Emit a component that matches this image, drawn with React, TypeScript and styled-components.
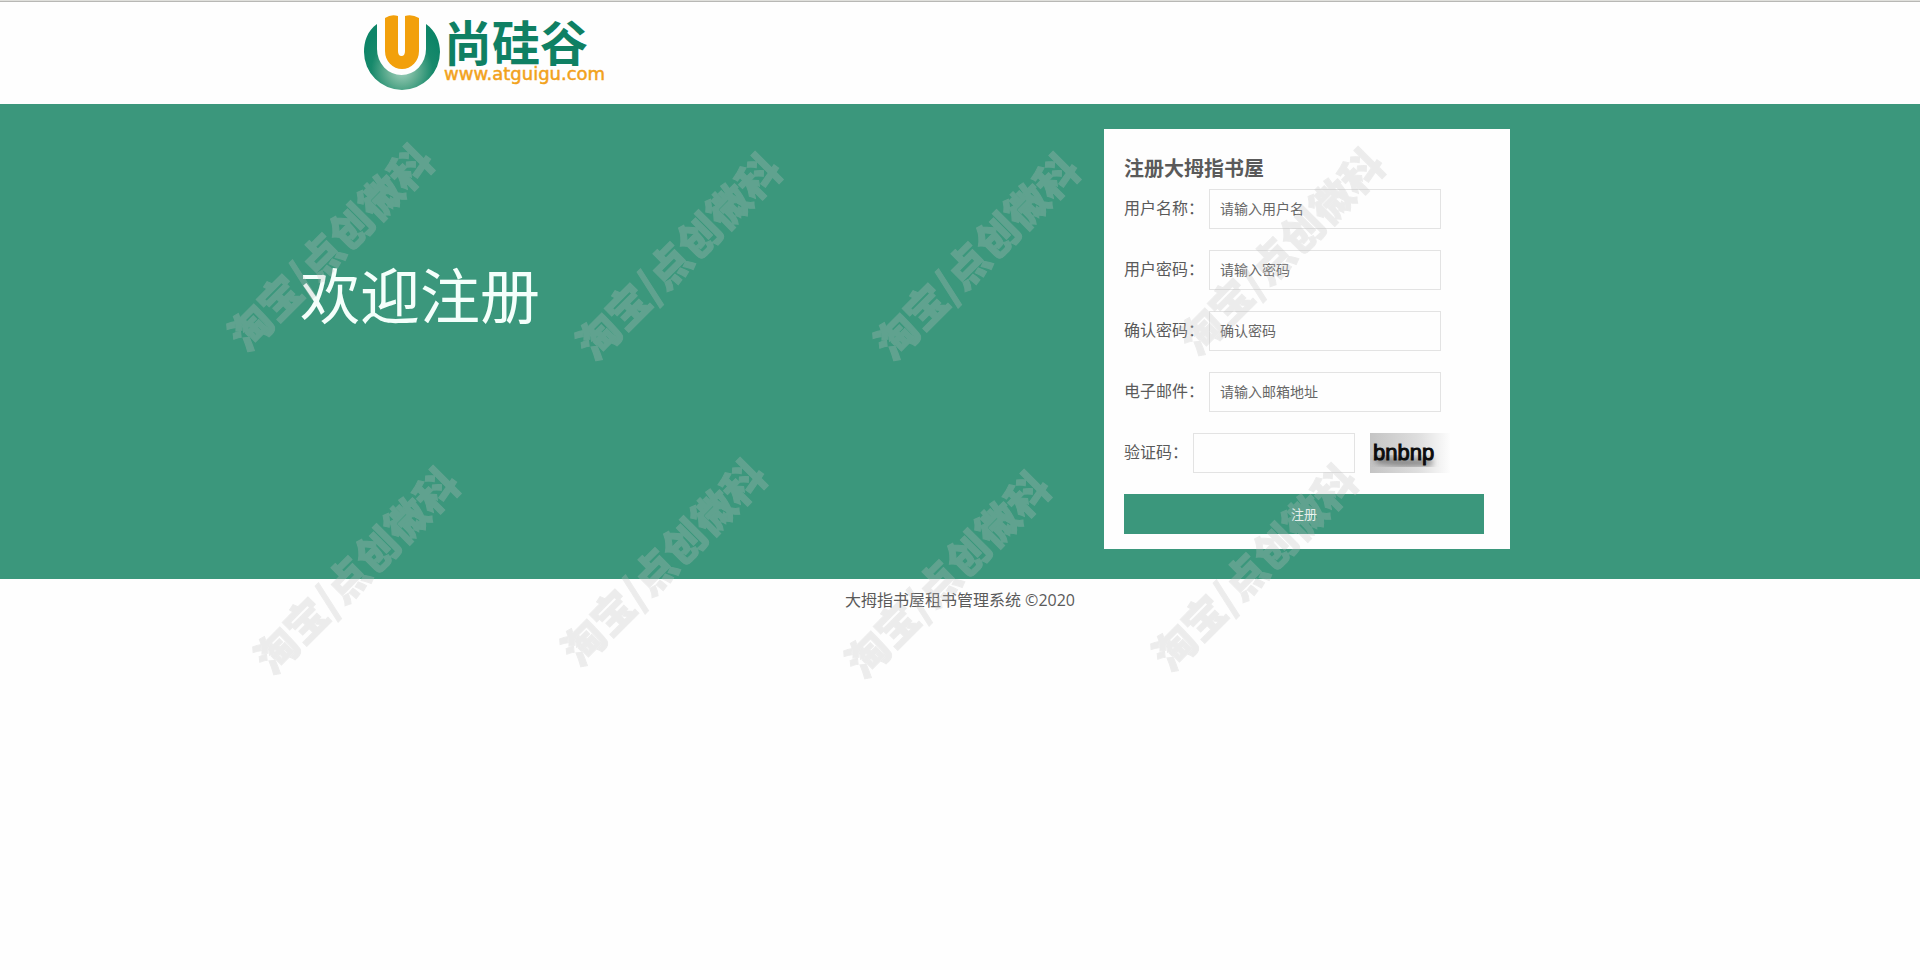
import React from "react";
import styled, { createGlobalStyle } from "styled-components";

const GREEN = "#3b977c";
const FONT = '"Open Sans", "Noto Sans CJK SC", sans-serif';

const GlobalStyle = createGlobalStyle`
  * { box-sizing: border-box; }
  body {
    margin: 0;
    background: #fefefe;
    color: #5a5a5a;
    font-family: ${FONT};
    font-size: 16px;
  }
`;

const Page = styled.div`
  position: relative;
  overflow-x: hidden;
  min-height: 100vh;
`;

const Header = styled.header`
  display: flex;
  justify-content: center;
  height: 104px;
  padding-top: 9px;
  border-top: 1px solid #e0e0dc;
  box-shadow: inset 0 1px 0 #b8b8b5;
`;

const HeaderInner = styled.div`
  width: 100%;
  max-width: 1200px;
`;

const LogoLink = styled.a`
  display: inline-block;
  svg { display: block; overflow: visible; }
`;

const Hero = styled.main`
  display: flex;
  justify-content: center;
  padding: 25px 0 30px;
  background: ${GREEN};
`;

const HeroInner = styled.div`
  display: flex;
  justify-content: space-between;
  align-items: flex-start;
  width: 100%;
  max-width: 1320px;
  padding-right: 110px;
`;

const Welcome = styled.h1`
  margin: 123px 0 0;
  color: #f4fffb;
  font-size: 60px;
  font-weight: 400;
  line-height: 88px;
`;

const Card = styled.form`
  width: 406px;
  padding: 20px 26px 15px 20px;
  background: #fefefe;
`;

const CardTitle = styled.h2`
  margin: 0;
  font-size: 20px;
  font-weight: 700;
  line-height: 40px;
`;

const Row = styled.div`
  display: flex;
  align-items: center;
  height: 40px;
  margin-bottom: 21px;
`;

const Label = styled.label`
  margin-right: 5px;
  padding-bottom: 2px;
  line-height: 24px;
  white-space: nowrap;
`;

const TextInput = styled.input<{ $short?: boolean }>`
  width: ${(p) => (p.$short ? 162 : 232)}px;
  height: 40px;
  padding: 0 10px 2px;
  border: 1px solid #e3e3e3;
  border-radius: 0;
  background: transparent;
  color: #555;
  font-family: ${FONT};
  font-size: 14px;
  outline: none;
  &::placeholder { color: #666; opacity: 1; }
  &:focus { border-color: ${GREEN}; }
`;

const CaptchaImage = styled.svg`
  display: block;
  margin-left: 15px;
`;

const SubmitButton = styled.button`
  display: block;
  width: 100%;
  height: 40px;
  padding: 0 0 2px;
  border: 0;
  background: ${GREEN};
  color: #f4fffb;
  font-family: ${FONT};
  font-size: 13px;
  cursor: pointer;
`;

const Footer = styled.footer`
  padding-top: 9px;
  line-height: 24px;
  text-align: center;
`;

const Watermarks = styled.div`
  position: absolute;
  inset: 0;
  overflow: hidden;
  pointer-events: none;
`;

const Mark = styled.span<{ $x: number; $y: number }>`
  position: absolute;
  left: ${(p) => p.$x}px;
  top: ${(p) => p.$y}px;
  color: #c1c1c1;
  -webkit-text-stroke: 1px #c1c1c1;
  opacity: 0.28;
  font-family: "Noto Sans CJK SC", sans-serif;
  font-size: 42px;
  font-weight: 900;
  line-height: 42px;
  white-space: nowrap;
  transform: translate(-50%, -50%) rotate(-45deg);
`;

const marks = [
  [329, 246],
  [677, 255],
  [975, 255],
  [1280, 250],
  [355, 569],
  [662, 561],
  [946, 573],
  [1253, 566],
];

const fields = [
  { id: "username", label: "用户名称：", type: "text", hint: "请输入用户名" },
  { id: "password", label: "用户密码：", type: "password", hint: "请输入密码" },
  { id: "confirm", label: "确认密码：", type: "password", hint: "确认密码" },
  { id: "email", label: "电子邮件：", type: "text", hint: "请输入邮箱地址" },
];

function Logo() {
  return (
    <svg width="260" height="84" viewBox="360 10 260 84" role="img" aria-label="尚硅谷">
      <defs>
        <radialGradient id="bowl" gradientUnits="userSpaceOnUse" cx="402" cy="70" r="44">
          <stop offset="0" stopColor="#a5d3c0" />
          <stop offset="0.35" stopColor="#62ae92" />
          <stop offset="0.7" stopColor="#17896b" />
          <stop offset="1" stopColor="#0d8467" />
        </radialGradient>
      </defs>
      <path
        d="M377 24 C367 31 364 42 364 52 A38 38 0 0 0 440 52 C440 42 436 31 426 24 V49 A24.500 26 0 0 1 377 49 Z"
        fill="url(#bowl)"
      />
      <path
        d="M385 18 Q391 14 398 16 V51 Q398 56 401.500 56 Q405 56 405 51 V16 Q412 14 419 18 V51 A17 18 0 0 1 385 51 Z"
        fill="#f2a00c"
      />
      <text x="444" y="61" fill="#0f8063" fontSize="48" fontWeight="700" fontFamily='"Noto Sans CJK SC", sans-serif'>
        尚硅谷
      </text>
      <text x="444" y="80" fill="#f2a21c" stroke="#f2a21c" strokeWidth="0.5" fontSize="18" fontFamily='"DejaVu Sans", sans-serif'>
        www.atguigu.com
      </text>
    </svg>
  );
}

function Captcha() {
  return (
    <CaptchaImage width="80" height="40" viewBox="0 0 80 40" role="img" aria-label="验证码图片">
      <defs>
        <linearGradient id="paper" x1="0" y1="0" x2="1" y2="0">
          <stop offset="0" stopColor="#c4c4c4" />
          <stop offset="0.6" stopColor="#dedede" />
          <stop offset="1" stopColor="#fdfdfd" />
        </linearGradient>
        <filter id="soft" x="-20%" y="-100%" width="140%" height="300%">
          <feGaussianBlur stdDeviation="3" />
        </filter>
      </defs>
      <rect width="80" height="40" fill="url(#paper)" />
      <path d="M6 26 Q30 31 62 29" stroke="#555" strokeWidth="7" fill="none" opacity="0.7" filter="url(#soft)" />
      <text
        x="3"
        y="27"
        fill="#0c0c0c"
        stroke="#0c0c0c"
        strokeWidth="1"
        fontSize="22"
        fontFamily='"Liberation Sans", sans-serif'
      >
        bnbnp
      </text>
    </CaptchaImage>
  );
}

export default function App() {
  return (
    <Page>
      <GlobalStyle />
      <Header>
        <HeaderInner>
          <LogoLink href="#">
            <Logo />
          </LogoLink>
        </HeaderInner>
      </Header>
      <Hero>
        <HeroInner>
          <Welcome>欢迎注册</Welcome>
          <Card onSubmit={(e) => e.preventDefault()}>
            <CardTitle>注册大拇指书屋</CardTitle>
            {fields.map((f) => (
              <Row key={f.id}>
                <Label htmlFor={f.id}>{f.label}</Label>
                <TextInput id={f.id} type={f.type} placeholder={f.hint} autoComplete="off" />
              </Row>
            ))}
            <Row>
              <Label htmlFor="code">验证码：</Label>
              <TextInput id="code" type="text" $short autoComplete="off" />
              <Captcha />
            </Row>
            <SubmitButton type="submit">注册</SubmitButton>
          </Card>
        </HeroInner>
      </Hero>
      <Footer>大拇指书屋租书管理系统 ©2020</Footer>
      <Watermarks aria-hidden="true">
        {marks.map(([x, y]) => (
          <Mark key={x} $x={x} $y={y}>
            淘宝/点创微科
          </Mark>
        ))}
      </Watermarks>
    </Page>
  );
}
